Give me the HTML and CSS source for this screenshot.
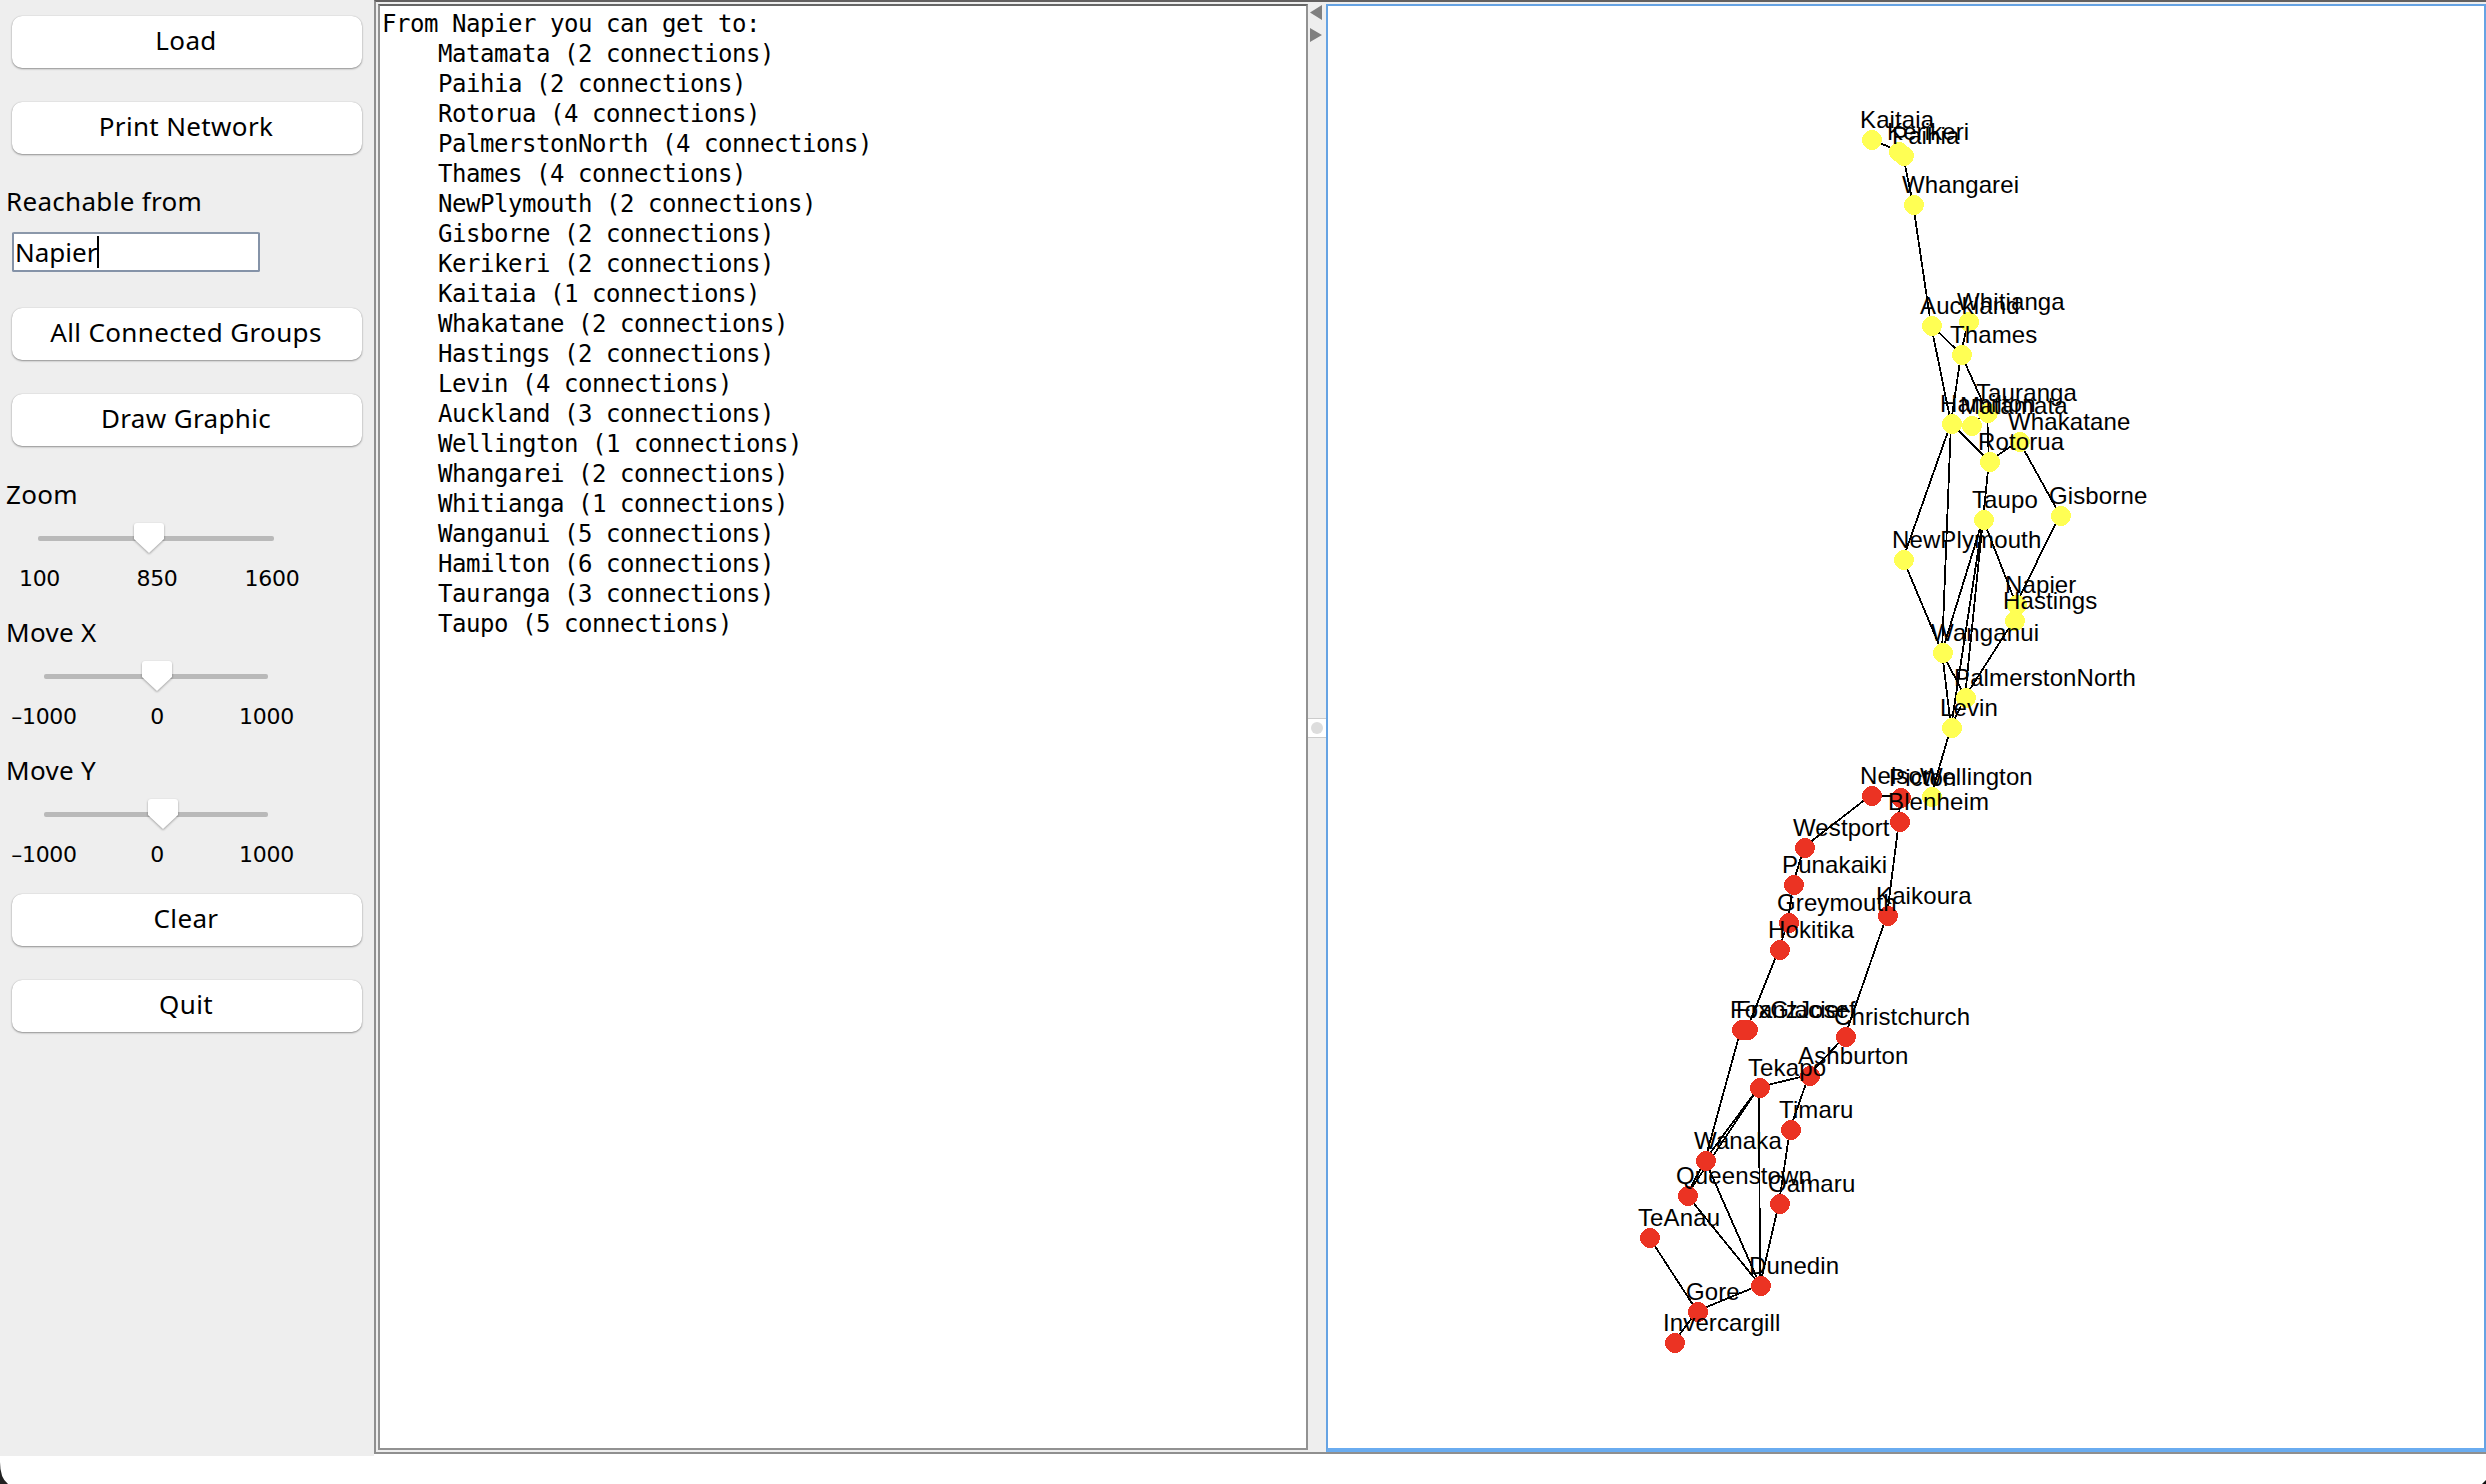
FILE: index.html
```html
<!DOCTYPE html>
<html lang="en">
<head>
<meta charset="utf-8">
<title>Bus network</title>
<link rel="stylesheet" href="styles.css">
</head>
<body>
<div class="window">
  <aside class="controls">
    <button class="btn">Load</button>
    <button class="btn">Print Network</button>
    <label class="caption caption-field">Reachable from</label>
    <div class="field"><span>Napier</span><i class="caret"></i></div>
    <button class="btn">All Connected Groups</button>
    <button class="btn">Draw Graphic</button>
    <label class="caption">Zoom</label>
    <svg class="slider" width="374" height="80" viewBox="0 0 374 80">
      <rect class="track" x="38" y="19" width="236" height="5" rx="2"/>
      <path class="thumb" d="M137 6h24q3 0 3 3v13l-15 14l-15-14V9q0-3 3-3z"/>
      <text x="39.5" y="69">100</text><text x="157" y="69">850</text><text x="272" y="69">1600</text>
    </svg>
    <label class="caption">Move X</label>
    <svg class="slider" width="374" height="80" viewBox="0 0 374 80">
      <rect class="track" x="44" y="19" width="224" height="5" rx="2"/>
      <path class="thumb" d="M145 6h24q3 0 3 3v13l-15 14l-15-14V9q0-3 3-3z"/>
      <text x="44" y="69">–1000</text><text x="157" y="69">0</text><text x="266.5" y="69">1000</text>
    </svg>
    <label class="caption">Move Y</label>
    <svg class="slider" width="374" height="80" viewBox="0 0 374 80">
      <rect class="track" x="44" y="19" width="224" height="5" rx="2"/>
      <path class="thumb" d="M151 6h24q3 0 3 3v13l-15 14l-15-14V9q0-3 3-3z"/>
      <text x="44" y="69">–1000</text><text x="157" y="69">0</text><text x="266.5" y="69">1000</text>
    </svg>
    <button class="btn">Clear</button>
    <button class="btn">Quit</button>
  </aside>
  <main class="split">
    <pre class="output">From Napier you can get to:
    Matamata (2 connections)
    Paihia (2 connections)
    Rotorua (4 connections)
    PalmerstonNorth (4 connections)
    Thames (4 connections)
    NewPlymouth (2 connections)
    Gisborne (2 connections)
    Kerikeri (2 connections)
    Kaitaia (1 connections)
    Whakatane (2 connections)
    Hastings (2 connections)
    Levin (4 connections)
    Auckland (3 connections)
    Wellington (1 connections)
    Whangarei (2 connections)
    Whitianga (1 connections)
    Wanganui (5 connections)
    Hamilton (6 connections)
    Tauranga (3 connections)
    Taupo (5 connections)</pre>
    <div class="divider">
      <svg width="18" height="46" viewBox="0 0 18 46"><path d="M14 1v15L2 8.500zM2 24v14l12-7z" fill="#808080"/></svg>
      <div class="grip"><i></i></div>
    </div>
    <svg class="map" id="map" viewBox="1328 6 1156 1442"></svg>
  </main>
  <svg class="corner left" width="8" height="22" viewBox="0 0 8 22"><path d="M0 0Q0 16 8 22H0z" fill="#222"/></svg>
  <svg class="corner right" width="4" height="4" viewBox="0 0 4 4"><path d="M4 0L0 4H4z" fill="#111"/></svg>
</div>
<script src="map.js"></script>
</body>
</html>
```
FILE: styles.css
```css
* { box-sizing: border-box; }
body { margin: 0; background: #fff; color: #000; overflow: hidden; }
.window {
  position: relative;
  display: grid;
  grid-template-columns: 374px 2112px;
  grid-template-rows: 1456px;
  width: 2486px;
  height: 1484px;
}
.controls {
  display: flex;
  flex-direction: column;
  padding-top: 16px;
  background: #eee;
  font: 26px/34px "Noto Sans", sans-serif;
}
.btn {
  flex: none;
  width: 350px;
  height: 52px;
  margin: 0 0 34px 12px;
  padding: 0 2px 4px 0;
  border: 0;
  border-radius: 10px;
  background: #fff;
  box-shadow: 0 1px 2px rgba(0, 0, 0, .38), 0 0 1px rgba(0, 0, 0, .25);
  font: 26px/46px "Noto Sans", sans-serif;
  letter-spacing: .35px;
  color: #000;
}
.caption {
  height: 34px;
  margin: -3px 0 3px 5px;
  padding-left: 1px;
  letter-spacing: .3px;
}
.caption-field { margin: -4px 0 2px 5px; height: 46px; }
.field {
  display: flex;
  align-items: center;
  width: 248px;
  height: 40px;
  margin: 0 0 36px 12px;
  border: 2px solid #8593a8;
  border-top-color: #8b98aa;
  border-radius: 2px;
  background: #fff;
  padding-left: 1px;
}
.caret { width: 2px; height: 32px; background: #000; }
.slider { flex: none; display: block; margin: 3px 0 21px; }
.slider text { font: 22px "DejaVu Sans", sans-serif; text-anchor: middle; letter-spacing: -.3px; }
.track { fill: #b9b9b9; }
.thumb { fill: #fff; filter: drop-shadow(0 1px 1px rgba(0, 0, 0, .35)); }
.split {
  display: grid;
  grid-template-columns: 932px 18px 1160px;
  height: 1454px;
  border-top: 2px solid #626060;
  border-left: 2px solid #8f8f8f;
  border-bottom: 2px solid #8f8f8f;
  padding-top: 2px;
  background: #eee;
}
.output {
  width: 930px;
  height: 1446px;
  margin: 0 0 0 2px;
  padding: 3px 0 0 2px;
  border: 2px solid #929292;
  border-top-color: #666;
  background: #fff;
  font: 24px/30px "DejaVu Sans Mono", monospace;
  letter-spacing: -.45px;
}
.divider { display: flex; flex-direction: column; align-items: center; }
.grip {
  display: grid;
  place-items: center;
  width: 18px;
  height: 20px;
  margin-top: 668px;
  background: #fff;
  border-top: 1px solid #ccc;
  border-bottom: 1px solid #ccc;
}
.grip i { width: 12px; height: 12px; border-radius: 50%; background: #ddd; }
.map {
  width: 1160px;
  height: 1448px;
  border: 2px solid #66a3e3;
  border-bottom: 4px solid #6aacf0;
  background: #fff;
}
.map line { stroke: #000; stroke-width: 1.8; shape-rendering: crispEdges; }
.map circle { shape-rendering: crispEdges; }
.map .reachable { fill: #ffff54; }
.map .other { fill: #eb3323; }
.map text { font: 24px "Liberation Sans", Arial, sans-serif; letter-spacing: .12px; }
.corner { position: absolute; bottom: 0; }
.left { left: 0; }
.right { right: 0; }
```
FILE: map.js
```js
const reachable = {
  Kaitaia: [1872, 140], Kerikeri: [1899, 152], Paihia: [1904, 156], Whangarei: [1914, 205],
  Auckland: [1932, 326], Whitianga: [1969, 322], Thames: [1962, 355], Hamilton: [1952, 424],
  Matamata: [1972, 426], Tauranga: [1988, 413], Whakatane: [2020, 442], Rotorua: [1990, 462],
  Taupo: [1984, 520], Gisborne: [2061, 516], NewPlymouth: [1904, 560], Napier: [2017, 605],
  Hastings: [2015, 621], Wanganui: [1943, 653], PalmerstonNorth: [1966, 698],
  Levin: [1952, 728], Wellington: [1932, 797]
};
const other = {
  Nelson: [1872, 796], Picton: [1901, 798], Blenheim: [1900, 822], Westport: [1805, 848],
  Punakaiki: [1794, 885], Greymouth: [1789, 923], Hokitika: [1780, 950], Kaikoura: [1888, 916],
  FranzJosef: [1748, 1030], FoxGlacier: [1742, 1030], Christchurch: [1846, 1037],
  Ashburton: [1810, 1076], Tekapo: [1760, 1088], Timaru: [1791, 1130], Wanaka: [1706, 1161],
  Queenstown: [1688, 1196], Oamaru: [1780, 1204], TeAnau: [1650, 1238], Dunedin: [1761, 1286],
  Gore: [1698, 1312], Invercargill: [1675, 1343]
};
const routes = `Kaitaia-Kerikeri Kerikeri-Paihia Paihia-Whangarei Whangarei-Auckland Auckland-Thames
Auckland-Hamilton Thames-Whitianga Thames-Hamilton Thames-Tauranga Hamilton-Matamata
Matamata-Tauranga Hamilton-Rotorua Tauranga-Rotorua Rotorua-Whakatane Rotorua-Taupo
Whakatane-Gisborne Gisborne-Napier Napier-Taupo Napier-Hastings Hastings-PalmerstonNorth
Hamilton-NewPlymouth NewPlymouth-Wanganui Hamilton-Wanganui Taupo-Wanganui
Taupo-PalmerstonNorth Taupo-Levin Wanganui-PalmerstonNorth Wanganui-Levin
PalmerstonNorth-Levin Levin-Wellington Nelson-Picton Picton-Blenheim Nelson-Westport
Westport-Punakaiki Punakaiki-Greymouth Greymouth-Hokitika Hokitika-FranzJosef
FranzJosef-FoxGlacier FoxGlacier-Wanaka Blenheim-Kaikoura Kaikoura-Christchurch
Christchurch-Ashburton Ashburton-Tekapo Ashburton-Timaru Timaru-Oamaru Oamaru-Dunedin
Tekapo-Wanaka Tekapo-Queenstown Tekapo-Dunedin Wanaka-Queenstown Wanaka-Dunedin
Queenstown-Dunedin Dunedin-Gore TeAnau-Gore Gore-Invercargill`.split(/\s+/);

const towns = { ...reachable, ...other };
let lines = "", dots = "", labels = "";
for (const route of routes) {
  const [a, b] = route.split("-").map(name => towns[name]);
  lines += `<line x1="${a[0] - 1}" y1="${a[1] - 1}" x2="${b[0] - 1}" y2="${b[1] - 1}"/>`;
}
for (const [name, [x, y]] of Object.entries(towns)) {
  dots += `<circle class="${name in reachable ? "reachable" : "other"}" cx="${x}" cy="${y}" r="10"/>`;
  labels += `<text x="${x - 12}" y="${y - 12}">${name}</text>`;
}
document.getElementById("map").innerHTML = lines + dots + labels;
```
